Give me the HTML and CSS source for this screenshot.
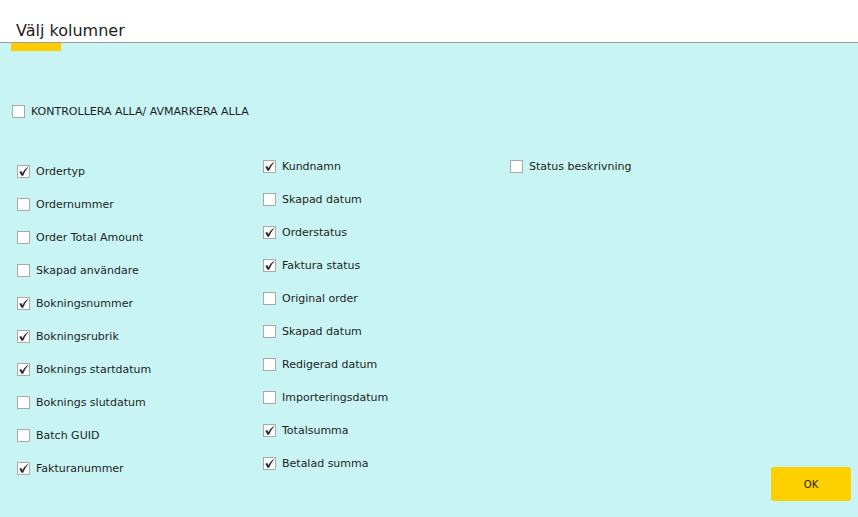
FILE: index.html
```html
<!DOCTYPE html>
<html lang="sv">
<head>
<meta charset="utf-8">
<title>Välj kolumner</title>
<link rel="stylesheet" href="styles.css">
</head>
<body>
<div class="page">
  <header class="header">
    <h1 class="title">Välj kolumner</h1>
  </header>
  <div class="tab-marker"></div>
  <main class="content">
    <label class="row select-all"><span class="box"></span><span class="label">KONTROLLERA ALLA/ AVMARKERA ALLA</span></label>
    <div class="columns">
      <div class="col col-first">
        <label class="row"><span class="box checked"><svg viewBox="0 0 13 13"><path d="M2.3 6.8 L4.4 5.9 L5.3 8.2 Q7.3 4.3 10.7 1.9 L11.1 2.5 Q8.2 5.4 6.1 10.8 L4.5 10.8 Z"/></svg></span><span class="label">Ordertyp</span></label>
        <label class="row"><span class="box"></span><span class="label">Ordernummer</span></label>
        <label class="row"><span class="box"></span><span class="label">Order Total Amount</span></label>
        <label class="row"><span class="box"></span><span class="label">Skapad användare</span></label>
        <label class="row"><span class="box checked"><svg viewBox="0 0 13 13"><path d="M2.3 6.8 L4.4 5.9 L5.3 8.2 Q7.3 4.3 10.7 1.9 L11.1 2.5 Q8.2 5.4 6.1 10.8 L4.5 10.8 Z"/></svg></span><span class="label">Bokningsnummer</span></label>
        <label class="row"><span class="box checked"><svg viewBox="0 0 13 13"><path d="M2.3 6.8 L4.4 5.9 L5.3 8.2 Q7.3 4.3 10.7 1.9 L11.1 2.5 Q8.2 5.4 6.1 10.8 L4.5 10.8 Z"/></svg></span><span class="label">Bokningsrubrik</span></label>
        <label class="row"><span class="box checked"><svg viewBox="0 0 13 13"><path d="M2.3 6.8 L4.4 5.9 L5.3 8.2 Q7.3 4.3 10.7 1.9 L11.1 2.5 Q8.2 5.4 6.1 10.8 L4.5 10.8 Z"/></svg></span><span class="label">Boknings startdatum</span></label>
        <label class="row"><span class="box"></span><span class="label">Boknings slutdatum</span></label>
        <label class="row"><span class="box"></span><span class="label">Batch GUID</span></label>
        <label class="row"><span class="box checked"><svg viewBox="0 0 13 13"><path d="M2.3 6.8 L4.4 5.9 L5.3 8.2 Q7.3 4.3 10.7 1.9 L11.1 2.5 Q8.2 5.4 6.1 10.8 L4.5 10.8 Z"/></svg></span><span class="label">Fakturanummer</span></label>
      </div>
      <div class="col">
        <label class="row"><span class="box checked"><svg viewBox="0 0 13 13"><path d="M2.3 6.8 L4.4 5.9 L5.3 8.2 Q7.3 4.3 10.7 1.9 L11.1 2.5 Q8.2 5.4 6.1 10.8 L4.5 10.8 Z"/></svg></span><span class="label">Kundnamn</span></label>
        <label class="row"><span class="box"></span><span class="label">Skapad datum</span></label>
        <label class="row"><span class="box checked"><svg viewBox="0 0 13 13"><path d="M2.3 6.8 L4.4 5.9 L5.3 8.2 Q7.3 4.3 10.7 1.9 L11.1 2.5 Q8.2 5.4 6.1 10.8 L4.5 10.8 Z"/></svg></span><span class="label">Orderstatus</span></label>
        <label class="row"><span class="box checked"><svg viewBox="0 0 13 13"><path d="M2.3 6.8 L4.4 5.9 L5.3 8.2 Q7.3 4.3 10.7 1.9 L11.1 2.5 Q8.2 5.4 6.1 10.8 L4.5 10.8 Z"/></svg></span><span class="label">Faktura status</span></label>
        <label class="row"><span class="box"></span><span class="label">Original order</span></label>
        <label class="row"><span class="box"></span><span class="label">Skapad datum</span></label>
        <label class="row"><span class="box"></span><span class="label">Redigerad datum</span></label>
        <label class="row"><span class="box"></span><span class="label">Importeringsdatum</span></label>
        <label class="row"><span class="box checked"><svg viewBox="0 0 13 13"><path d="M2.3 6.8 L4.4 5.9 L5.3 8.2 Q7.3 4.3 10.7 1.9 L11.1 2.5 Q8.2 5.4 6.1 10.8 L4.5 10.8 Z"/></svg></span><span class="label">Totalsumma</span></label>
        <label class="row"><span class="box checked"><svg viewBox="0 0 13 13"><path d="M2.3 6.8 L4.4 5.9 L5.3 8.2 Q7.3 4.3 10.7 1.9 L11.1 2.5 Q8.2 5.4 6.1 10.8 L4.5 10.8 Z"/></svg></span><span class="label">Betalad summa</span></label>
      </div>
      <div class="col">
        <label class="row"><span class="box"></span><span class="label">Status beskrivning</span></label>
      </div>
    </div>
  </main>
  <footer class="footer">
    <button class="ok-button" type="button">OK</button>
  </footer>
</div>
</body>
</html>
```
FILE: styles.css
```css
html, body {
  margin: 0;
  padding: 0;
}
body {
  background: #c8f5f3;
  font-family: "DejaVu Sans", Verdana, sans-serif;
  color: #222;
}
.page {
  position: relative;
  min-height: 517px;
}
.header {
  background: #ffffff;
  height: 43px;
  box-sizing: border-box;
  border-bottom: 1px solid #9c9c9c;
  padding: 21px 0 0 16px;
}
.title {
  margin: 0;
  font-size: 16px;
  font-weight: normal;
  line-height: 19px;
  color: #1c1c1c;
}
.tab-marker {
  width: 50px;
  height: 8px;
  margin-left: 11px;
  background: #ffcc00;
}
.content {
  padding-top: 44px;
}
.row {
  display: flex;
  align-items: center;
  gap: 6px;
  height: 33px;
  font-size: 11px;
  color: #1e1e1e;
  white-space: nowrap;
}
.select-all {
  margin-left: 12px;
}
.columns {
  display: grid;
  grid-template-columns: 246px 247px 1fr;
  margin-top: 22px;
  padding-left: 17px;
}
.col-first {
  padding-top: 5px;
}
.box {
  flex: 0 0 auto;
  width: 13px;
  height: 13px;
  box-sizing: border-box;
  background: #ffffff;
  border: 1px solid #a9a9a9;
  display: flex;
  align-items: center;
  justify-content: center;
}
.box svg {
  width: 13px;
  height: 13px;
  margin: -1px;
  fill: #2b2b2b;
}
.footer {
  position: absolute;
  right: 7px;
  bottom: 16px;
}
.ok-button {
  display: block;
  width: 80px;
  height: 34px;
  border: none;
  border-radius: 3px;
  background: #ffd000;
  font-family: "DejaVu Sans", Verdana, sans-serif;
  font-size: 10px;
  color: #222;
  padding: 0;
}
```
